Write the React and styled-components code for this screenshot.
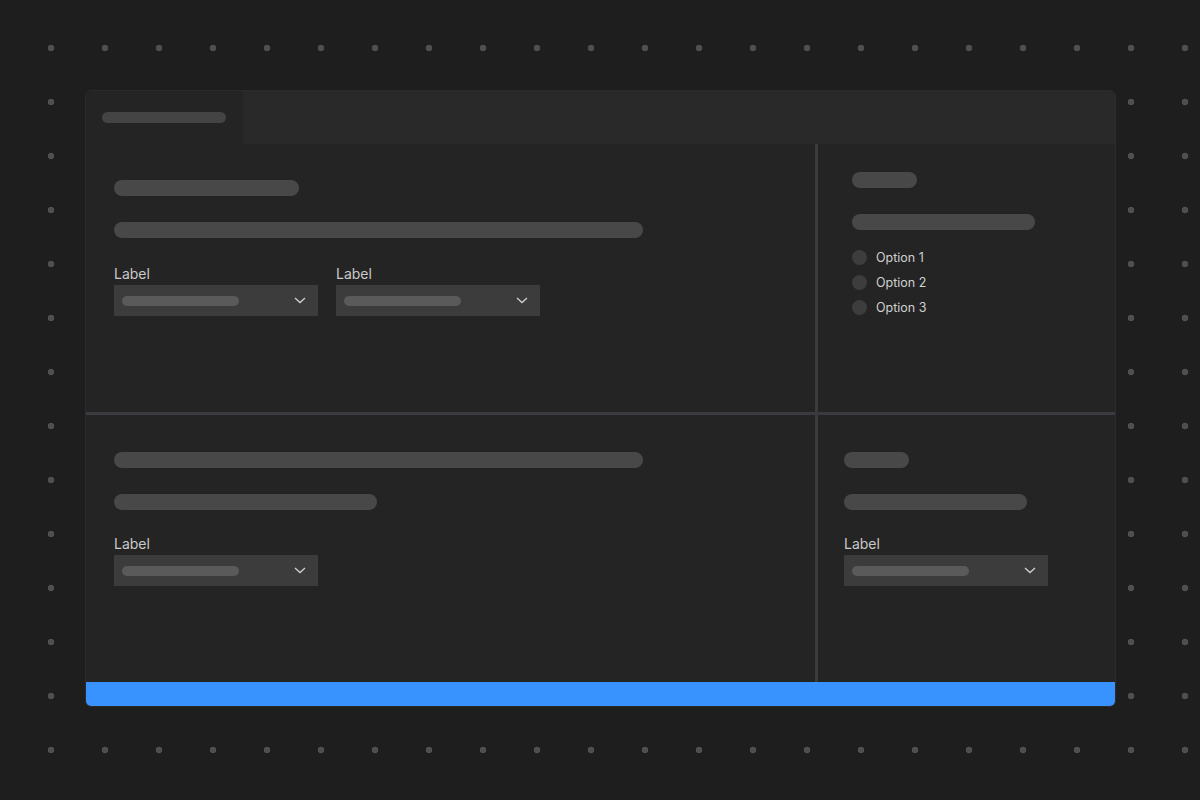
import React from 'react';
import styled, { createGlobalStyle } from 'styled-components';

const GlobalStyle = createGlobalStyle`
  body {
    margin: 0;
    background: #1e1e1e;
    font-family: Inter, "Noto Sans", sans-serif;
  }
`;

const Page = styled.div`
  width: 1200px;
  height: 800px;
  box-sizing: border-box;
  padding: 90px 0 0 85px;
  background-color: #1e1e1e;
  background-image: radial-gradient(circle at 27px 27px, #4f4f4f 0 3px, transparent 3.6px);
  background-size: 54px 54px;
  background-position: 24px 21px;
`;

const Window = styled.div`
  width: 1031px;
  box-sizing: border-box;
  border: 1px solid #2b2b2b;
  border-radius: 6px;
  overflow: hidden;
  background: #242424;
  display: flex;
  flex-direction: column;
`;

const TabBar = styled.div`
  height: 53px;
  display: flex;
  background: #292929;
`;

const Tab = styled.div`
  width: 157px;
  background: #242424;
  display: flex;
  align-items: center;
  padding-left: 16px;
  box-sizing: border-box;
`;

const Body = styled.div`
  display: grid;
  grid-template-columns: 729px 1fr;
  grid-template-rows: 268px 267px;
  gap: 3px;
  background: #393b40;
`;

const Cell = styled.div`
  background: #242424;
  box-sizing: border-box;
  padding: ${(p) => p.$pad};
  display: flex;
  flex-direction: column;
  align-items: flex-start;
`;

const Pill = styled.div`
  width: ${(p) => p.$w}px;
  height: ${(p) => p.$h || 16}px;
  border-radius: 8px;
  background: ${(p) => p.$color || '#484848'};
  margin-bottom: ${(p) => p.$mb || 0}px;
  flex-shrink: 0;
`;

const Fields = styled.div`
  display: flex;
  gap: 18px;
  margin-top: ${(p) => p.$mt}px;
`;

const Field = styled.div`
  display: flex;
  flex-direction: column;
`;

const Label = styled.span`
  font-size: 14px;
  line-height: 17px;
  color: #c9c9c9;
  margin-bottom: 3px;
`;

const Select = styled.div`
  width: 204px;
  height: 31px;
  background: #3c3c3c;
  display: flex;
  align-items: center;
  justify-content: space-between;
  padding: 0 12px 0 8px;
  box-sizing: border-box;
`;

const Options = styled.div`
  display: flex;
  flex-direction: column;
  gap: 10px;
  margin-top: 20px;
`;

const Option = styled.div`
  display: flex;
  align-items: center;
  gap: 9px;
  height: 15px;
  font-size: 12.5px;
  color: #d0d0d0;
`;

const Radio = styled.span`
  width: 15px;
  height: 15px;
  border-radius: 50%;
  background: #3d3d3d;
`;

const BlueBar = styled.div`
  height: 24px;
  background: #3893fe;
`;

const Chevron = () => (
  <svg width="12" height="7" viewBox="0 0 12 7" fill="none">
    <path d="M1 1l5 4.6L11 1" stroke="#cfcfcf" strokeWidth="1.3" />
  </svg>
);

const Dropdown = ({ label }) => (
  <Field>
    <Label>{label}</Label>
    <Select>
      <Pill $w={117} $h={10} $color="#5a5a5a" />
      <Chevron />
    </Select>
  </Field>
);

export default function App() {
  return (
    <>
      <GlobalStyle />
      <Page>
        <Window>
          <TabBar>
            <Tab>
              <Pill $w={124} $h={11} $color="#444" />
            </Tab>
          </TabBar>
          <Body>
            <Cell $pad="36px 0 0 28px">
              <Pill $w={185} $mb={26} />
              <Pill $w={529} />
              <Fields $mt={27}>
                <Dropdown label="Label" />
                <Dropdown label="Label" />
              </Fields>
            </Cell>
            <Cell $pad="28px 0 0 34px">
              <Pill $w={65} $mb={26} />
              <Pill $w={183} />
              <Options>
                <Option><Radio />Option 1</Option>
                <Option><Radio />Option 2</Option>
                <Option><Radio />Option 3</Option>
              </Options>
            </Cell>
            <Cell $pad="37px 0 0 28px">
              <Pill $w={529} $mb={26} />
              <Pill $w={263} />
              <Fields $mt={25}>
                <Dropdown label="Label" />
              </Fields>
            </Cell>
            <Cell $pad="37px 0 0 26px">
              <Pill $w={65} $mb={26} />
              <Pill $w={183} />
              <Fields $mt={25}>
                <Dropdown label="Label" />
              </Fields>
            </Cell>
          </Body>
          <BlueBar />
        </Window>
      </Page>
    </>
  );
}
